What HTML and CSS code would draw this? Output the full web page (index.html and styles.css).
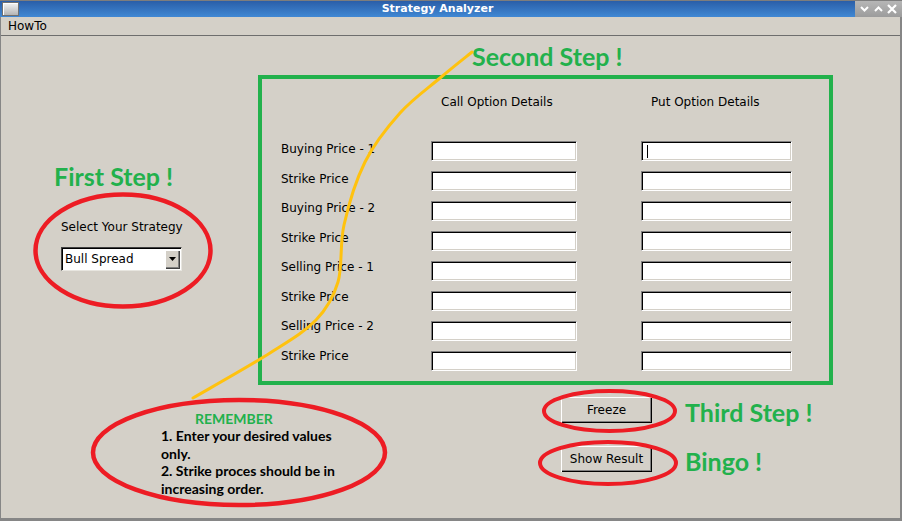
FILE: index.html
```html
<!DOCTYPE html>
<html lang="en">
<head>
<meta charset="utf-8">
<title>Strategy Analyzer</title>
<link rel="stylesheet" href="styles.css">
</head>
<body>
<div class="window">
  <header class="titlebar">
    <span class="sysicon"></span>
    <span class="title">Strategy Analyzer</span>
    <span class="controls">
      <svg width="9" height="6" viewBox="0 0 9 6"><path d="M1 1 L4.5 4.5 L8 1" fill="none" stroke="#fff" stroke-width="2"/></svg>
      <svg width="9" height="6" viewBox="0 0 9 6"><path d="M1 5 L4.5 1.5 L8 5" fill="none" stroke="#fff" stroke-width="2"/></svg>
      <svg width="10" height="10" viewBox="0 0 10 10"><path d="M1 1 L9 9 M9 1 L1 9" fill="none" stroke="#fff" stroke-width="2.2"/></svg>
    </span>
  </header>
  <div class="frame">
    <nav class="menubar"><span class="menu-item">HowTo</span></nav>
    <main class="content">
      <section class="left">
        <h2 class="step step-first">First Step !</h2>
        <div class="strategy">
          <div class="strategy-label">Select Your Strategy</div>
          <div class="combo">
            <span class="combo-value">Bull Spread</span>
            <span class="combo-btn"><svg width="7" height="4" viewBox="0 0 7 4"><path d="M0 0 H7 L3.5 4 Z" fill="#000"/></svg></span>
          </div>
        </div>
      </section>
      <section class="right">
        <h2 class="step step-second">Second Step !</h2>
        <div class="panel">
          <div class="panel-head">
            <span></span>
            <span class="col-title">Call Option Details</span>
            <span class="col-title">Put Option Details</span>
          </div>
          <div class="form">
            <div class="labels">
              <span class="lbl">Buying Price - 1</span>
              <span class="lbl">Strike Price</span>
              <span class="lbl">Buying Price - 2</span>
              <span class="lbl">Strike Price</span>
              <span class="lbl">Selling Price - 1</span>
              <span class="lbl">Strike Price</span>
              <span class="lbl">Selling Price - 2</span>
              <span class="lbl">Strike Price</span>
            </div>
            <div class="inputs">
              <input class="field call"><input class="field put focused">
              <input class="field call"><input class="field put">
              <input class="field call"><input class="field put">
              <input class="field call"><input class="field put">
              <input class="field call"><input class="field put">
              <input class="field call"><input class="field put">
              <input class="field call"><input class="field put">
              <input class="field call"><input class="field put">
            </div>
          </div>
        </div>
        <div class="actions">
          <div class="action-row"><button class="btn">Freeze</button><span class="step step-side">Third Step !</span></div>
          <div class="action-row"><button class="btn">Show Result</button><span class="step step-side">Bingo !</span></div>
        </div>
      </section>
      <div class="note">
        <div class="note-title">REMEMBER</div>
        <div class="note-text">1. Enter your desired values<br>only.<br>2. Strike proces should be in<br>increasing order.</div>
      </div>
    </main>
  </div>
  <svg class="overlay" width="902" height="521" viewBox="0 0 902 521">
    <ellipse cx="123" cy="250.5" rx="87.5" ry="56" fill="none" stroke="#ed1c24" stroke-width="4.5"/>
    <ellipse cx="609.5" cy="411" rx="65.5" ry="20" fill="none" stroke="#ed1c24" stroke-width="4"/>
    <ellipse cx="608" cy="463" rx="68" ry="21" fill="none" stroke="#ed1c24" stroke-width="4"/>
    <ellipse cx="239" cy="452.5" rx="146" ry="52.5" fill="none" stroke="#ed1c24" stroke-width="4.5"/>
    <path d="M472 52 C466.7 56.3 452 67.8 440 78 C428 88.2 412.5 99 400 113 C387.5 127 374.3 143.3 365 162 C355.7 180.7 348.5 205 344 225 C339.5 245 342.7 266.2 338 282 C333.3 297.8 327.3 308.2 316 320 C304.7 331.8 290.5 340 270 353 C249.5 366 205.8 390.5 193 398" fill="none" stroke="#ffc20e" stroke-width="3" stroke-linecap="round"/>
  </svg>
</div>
</body>
</html>
```

FILE: styles.css
```css
* { box-sizing: border-box; }
html, body { margin: 0; padding: 0; }
body {
  width: 902px;
  height: 521px;
  overflow: hidden;
  background: #d4d0c8;
  font-family: "DejaVu Sans", sans-serif;
  font-size: 12px;
  color: #000;
}
.window {
  position: relative;
  width: 902px;
  height: 521px;
  display: flex;
  flex-direction: column;
  background: #d4d0c8;
}
.titlebar {
  height: 17px;
  display: flex;
  background: linear-gradient(#2a5ea8, #4088d4);
  border-top: 1px solid #7d7d7d;
}
.sysicon {
  width: 17px;
  height: 14px;
  margin: 1px 1px 0 2px;
  background: linear-gradient(#f4f4f4, #b4b4b4);
  border: 1px solid #707070;
  box-shadow: inset 1px 1px 0 #fff;
}
.title {
  flex: 1;
  text-align: center;
  color: #fff;
  font-weight: bold;
  font-size: 11px;
  line-height: 15px;
}
.controls {
  width: 47px;
  display: flex;
  align-items: center;
  justify-content: space-evenly;
  background: linear-gradient(#b6b6b6, #9c9c9c);
}
.frame {
  flex: 1;
  display: flex;
  flex-direction: column;
  border-left: 1px solid #868686;
  border-right: 2px solid #868686;
  border-bottom: 3px solid #868686;
}
.menubar {
  height: 19px;
  border-bottom: 1px solid #6e6e6e;
  padding-left: 7px;
  line-height: 18px;
}
.content {
  flex: 1;
  display: flex;
  position: relative;
}
.step {
  margin: 0;
  font-family: Lato, "Open Sans", sans-serif;
  font-weight: bold;
  font-size: 25px;
  line-height: 28px;
  color: #22b14c;
  white-space: nowrap;
}
.left {
  width: 257px;
  padding: 126px 0 0 53px;
}
.strategy {
  margin: 29px 0 0 7px;
}
.strategy-label {
  line-height: 16px;
}
.combo {
  margin-top: 12px;
  width: 121px;
  height: 24px;
  display: flex;
  align-items: center;
  background: #fff;
  border: 1px solid;
  border-color: #404040 #e8e6e0 #e8e6e0 #404040;
  box-shadow: inset 1px 1px 0 #000;
}
.combo-value {
  flex: 1;
  padding-left: 3px;
}
.combo-btn {
  width: 15px;
  height: 19px;
  margin-right: 1px;
  display: flex;
  align-items: center;
  justify-content: center;
  background: #d4d0c8;
  box-shadow: inset 1px 1px 0 #fff, inset -1px -1px 0 #404040, inset -2px -2px 0 #808080;
}
.right {
  padding-top: 6px;
}
.step-second {
  margin-left: 214px;
}
.panel {
  margin-top: 5px;
  width: 575px;
  height: 310px;
  border: 4px solid #22b14c;
  padding: 15px 0 0 19px;
}
.panel-head {
  display: grid;
  grid-template-columns: 150px 210px 151px;
  line-height: 16px;
  margin-bottom: 31px;
}
.col-title {
  padding-left: 10px;
}
.form {
  display: flex;
}
.labels {
  width: 150px;
  display: flex;
  flex-direction: column;
  gap: 13.57px;
}
.lbl {
  line-height: 16px;
  white-space: nowrap;
}
.inputs {
  display: grid;
  grid-template-columns: 210px 151px;
  grid-auto-rows: 20px;
  row-gap: 10px;
}
.field {
  height: 20px;
  margin: 0;
  padding: 0;
  background: #fff;
  border: 1px solid;
  border-color: #808080 #fff #fff #808080;
  box-shadow: inset 1px 1px 0 #000, inset -1px -1px 0 #d4d0c8;
  outline: none;
}
.field.call { width: 146px; }
.field.put { width: 151px; }
.field.focused {
  background: linear-gradient(#000, #000) no-repeat 5px 3px / 1px 13px, #fff;
}
.actions {
  margin: 12px 0 0 303px;
  display: flex;
  flex-direction: column;
  gap: 20px;
}
.action-row {
  display: flex;
  align-items: flex-start;
  gap: 33px;
}
.btn {
  width: 91px;
  height: 26px;
  padding: 0;
  background: #d4d0c8;
  border: 0;
  font-family: "DejaVu Sans", sans-serif;
  font-size: 12px;
  color: #000;
  box-shadow: inset 1px 1px 0 #fff, inset -1px -1px 0 #000, inset -2px -2px 0 #808080;
}
.step-side {
  margin-top: 1px;
}
.note {
  position: absolute;
  left: 90px;
  top: 362px;
  width: 296px;
  padding: 13px 0 0 70px;
  font-family: Lato, "Open Sans", sans-serif;
  font-weight: bold;
}
.note-title {
  padding-left: 34px;
  font-size: 14px;
  line-height: 16px;
  color: #22b14c;
}
.note-text {
  font-size: 14px;
  line-height: 17.7px;
  color: #000;
}
.overlay {
  position: absolute;
  left: 0;
  top: 0;
  pointer-events: none;
}
```
